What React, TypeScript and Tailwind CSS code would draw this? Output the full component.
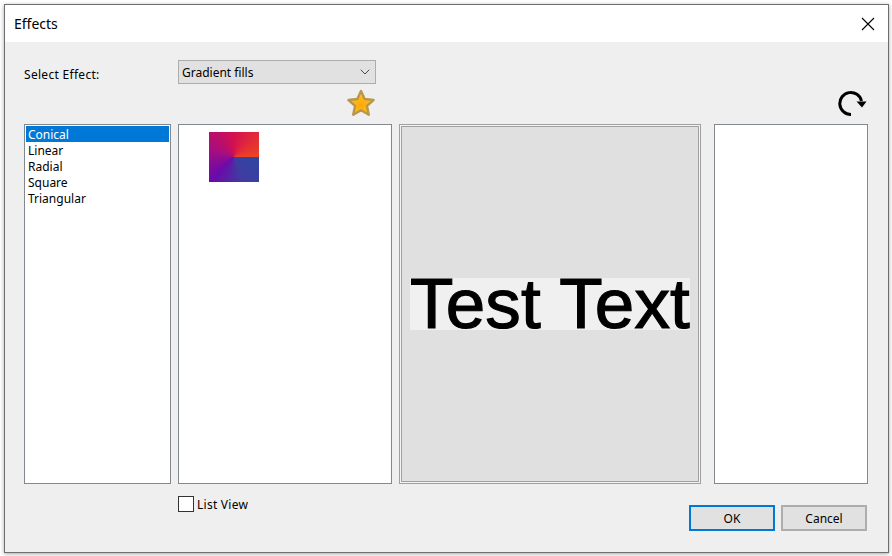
import { ChevronDown } from "lucide-react";

const items = ["Conical", "Linear", "Radial", "Square", "Triangular"];

function Star() {
  return (
    <svg width="28" height="30" viewBox="0 0 28 30" aria-hidden="true">
      <defs>
        <radialGradient id="star" cx="0.5" cy="0.6" r="0.55">
          <stop offset="0" stopColor="#ffa90c" />
          <stop offset="0.6" stopColor="#fdb814" />
          <stop offset="1" stopColor="#ffdc62" />
        </radialGradient>
      </defs>
      <path
        d="M14 3l3.6 8 8.9 1-6.5 5.9 1.8 8.8-7.8-4.5-7.8 4.5 1.8-8.8-6.5-5.9 8.9-1z"
        fill="url(#star)"
        stroke="#b9964a"
        strokeWidth="2.4"
        strokeLinejoin="round"
      />
    </svg>
  );
}

function Reload() {
  return (
    <svg width="30" height="28" viewBox="0 0 30 28" aria-hidden="true">
      <path d="M13 25.5A11 11 0 1 1 23.5 12" fill="none" stroke="#000" strokeWidth="3" />
      <path d="M18.5 12.5h10l-4.5 6z" fill="#000" />
    </svg>
  );
}

export default function App() {
  return (
    <div className="h-[556px] w-[892px] overflow-hidden bg-white px-1 pt-1 font-['Noto_Sans','Open_Sans',sans-serif] text-xs text-black">
      <div className="flex h-[549px] w-[885px] flex-col border border-[#6e6e6e] bg-[#efefef] shadow-[0_1px_4px_rgba(0,0,0,0.35)]">
        <header className="flex h-[37px] shrink-0 items-center justify-between bg-white pl-[9px] pr-[13px]">
          <span className="pt-[2px] text-[14px]">Effects</span>
          <svg width="14" height="14" viewBox="0 0 14 14" aria-hidden="true">
            <path d="M1 1l12 12M13 1L1 13" stroke="#000" strokeWidth="1.1" />
          </svg>
        </header>

        <div className="flex items-start pl-[19px] pt-[18px]">
          <label className="w-[154px] pt-[7px] tracking-[0.3px]">Select Effect:</label>
          <div className="flex h-6 w-[198px] items-center justify-between border border-[#adadad] bg-[#e1e1e1] pl-[3px] pr-[2px]">
            <span className="pt-[2px]">Gradient fills</span>
            <ChevronDown size={16} strokeWidth={1.2} className="text-[#222]" />
          </div>
        </div>

        <div className="flex h-[40px] pl-[342px] pt-[5px]">
          <div className="-mt-[1px] h-[30px]">
            <Star />
          </div>
          <div className="ml-[463px] mt-0">
            <Reload />
          </div>
        </div>

        <div className="flex h-[360px] pl-[19px]">
          <ul className="w-[147px] border border-[#828790] bg-white p-[1px]">
            {items.map((item, i) => (
              <li
                key={item}
                className={
                  i === 0
                    ? "flex h-4 items-center bg-[#0078d7] pl-[2px] pt-[2px] text-white"
                    : "flex h-4 items-center pl-[2px] pt-[2px]"
                }
              >
                {item}
              </li>
            ))}
          </ul>
          <div className="ml-[7px] w-[214px] border border-[#828790] bg-white pl-[30px] pt-[7px]">
            <div className="size-[50px] bg-[conic-gradient(from_90deg,#2f45a0_0deg,#3f3ca0_70deg,#6c0aa9_135deg,#a80d80_200deg,#d4104f_270deg,#ed4423_360deg)]" />
          </div>
          <div className="ml-[7px] flex w-[302px] items-center justify-center border border-[#a0a0a0] bg-[#e0e0e0] shadow-[inset_0_0_0_1px_#f4f4f4,inset_0_0_0_2px_#a0a0a0]">
            <div className="flex h-[52px] w-[280px] items-center justify-center bg-[#f0f0f0] font-['Liberation_Sans',sans-serif] text-[71px] leading-[52px] tracking-[0.1px] [-webkit-text-stroke:1.2px_black]">
              Test Text
            </div>
          </div>
          <div className="ml-[13px] w-[154px] border border-[#828790] bg-white" />
        </div>

        <div className="flex justify-between pl-[173px] pr-[21px]">
          <label className="mt-3 flex h-4 items-center gap-[3px] tracking-[0.25px]">
            <span className="size-4 border border-[#333] bg-white" />
            <span className="pt-[1px]">List View</span>
          </label>
          <div className="mt-[21px] flex gap-[6px]">
            <button className="h-[26px] w-[86px] border-2 border-[#0078d7] bg-[#e1e1e1] pt-[1px]">OK</button>
            <button className="h-[26px] w-[86px] border-2 border-[#adadad] bg-[#e1e1e1] pt-[1px]">Cancel</button>
          </div>
        </div>
      </div>
    </div>
  );
}
